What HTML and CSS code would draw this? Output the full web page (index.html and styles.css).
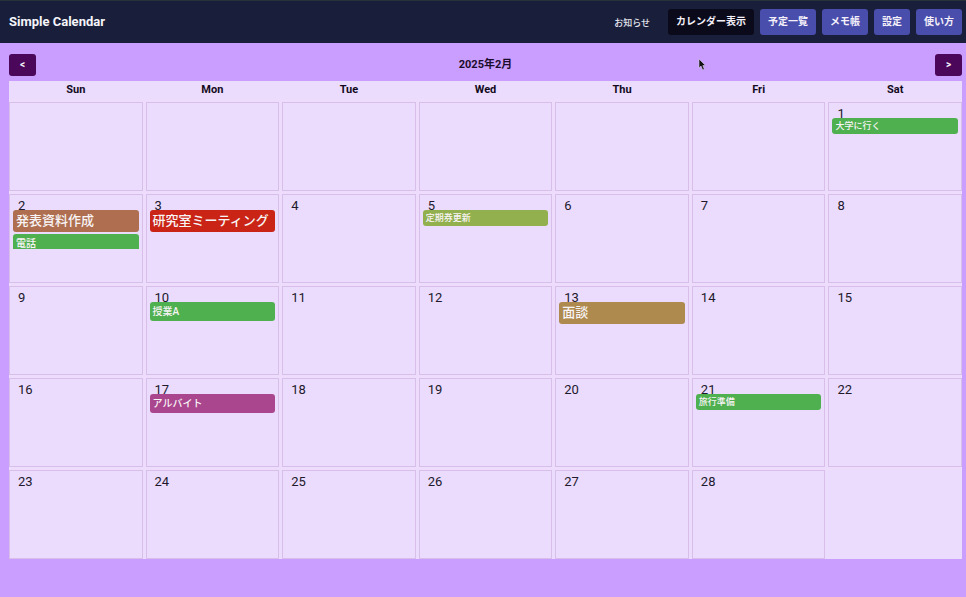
FILE: index.html
```
<!DOCTYPE html>
<html lang="ja">
<head>
<meta charset="utf-8">
<meta name="viewport" content="width=device-width, initial-scale=1">
<title>Simple Calendar</title>
<link rel="stylesheet" href="styles.css">
</head>
<body>
<header class="header">
  <h1 class="title">Simple Calendar</h1>
  <nav class="nav">
    <a class="nav-news" href="#news">お知らせ</a>
    <button class="nav-button nav-button-active" type="button">カレンダー表示</button>
    <button class="nav-button" type="button">予定一覧</button>
    <button class="nav-button" type="button">メモ帳</button>
    <button class="nav-button" type="button">設定</button>
    <button class="nav-button" type="button">使い方</button>
  </nav>
</header>
<main class="main">
  <div class="toolbar">
    <button class="step" type="button">&lt;</button>
    <h2 class="month">2025年2月</h2>
    <button class="step" type="button">&gt;</button>
    <svg class="cursor" width="8" height="13" viewBox="0 0 8 13" aria-hidden="true"><path d="M1 1v9l2-2 1.700 4 1.600-.7L4.800 7.500H7.500z" fill="#111" stroke="#d9c9ea" stroke-width=".6"/></svg>
  </div>
  <table class="calendar">
    <thead>
      <tr><th>Sun</th><th>Mon</th><th>Tue</th><th>Wed</th><th>Thu</th><th>Fri</th><th>Sat</th></tr>
    </thead>
    <tbody>
      <tr>
        <td></td><td></td><td></td><td></td><td></td><td></td>
        <td><div class="day">1</div><div class="events"><div class="event small green">大学に行く</div></div></td>
      </tr>
      <tr>
        <td><div class="day">2</div><div class="events"><div class="event large brown">発表資料作成</div><div class="event medium green">電話</div></div></td>
        <td><div class="day">3</div><div class="events"><div class="event large red">研究室ミーティング</div></div></td>
        <td><div class="day">4</div></td>
        <td><div class="day">5</div><div class="events"><div class="event small olive">定期券更新</div></div></td>
        <td><div class="day">6</div></td>
        <td><div class="day">7</div></td>
        <td><div class="day">8</div></td>
      </tr>
      <tr>
        <td><div class="day">9</div></td>
        <td><div class="day">10</div><div class="events"><div class="event medium green">授業A</div></div></td>
        <td><div class="day">11</div></td>
        <td><div class="day">12</div></td>
        <td><div class="day">13</div><div class="events"><div class="event large gold">面談</div></div></td>
        <td><div class="day">14</div></td>
        <td><div class="day">15</div></td>
      </tr>
      <tr>
        <td><div class="day">16</div></td>
        <td><div class="day">17</div><div class="events"><div class="event medium magenta">アルバイト</div></div></td>
        <td><div class="day">18</div></td>
        <td><div class="day">19</div></td>
        <td><div class="day">20</div></td>
        <td><div class="day">21</div><div class="events"><div class="event small green">旅行準備</div></div></td>
        <td><div class="day">22</div></td>
      </tr>
      <tr>
        <td><div class="day">23</div></td>
        <td><div class="day">24</div></td>
        <td><div class="day">25</div></td>
        <td><div class="day">26</div></td>
        <td><div class="day">27</div></td>
        <td><div class="day">28</div></td>
      </tr>
    </tbody>
  </table>
</main>
</body>
</html>
```

FILE: styles.css
```
* {
  box-sizing: border-box;
}

body {
  margin: 0;
  background: #c99eff;
  color: #21182b;
  font-family: Roboto, "Noto Sans CJK JP", sans-serif;
}

button {
  border: 0;
  font-family: inherit;
  font-weight: 700;
  color: #f4f0fa;
  cursor: pointer;
}

.header {
  display: flex;
  align-items: center;
  justify-content: space-between;
  padding: 8px 4px 8px 9px;
  border-top: 1px solid #25323a;
  background: #191f3b;
}

.title {
  margin: 0;
  font-size: 13px;
  line-height: 16px;
  color: #f5f5fa;
}

.nav {
  display: flex;
  align-items: center;
  gap: 6px;
}

.nav-news {
  margin-right: 12px;
  font-size: 9px;
  font-weight: 500;
  color: #e6e6ee;
  text-decoration: none;
}

.nav-button {
  padding: 0 8px;
  border-radius: 3px;
  background: #494dab;
  font-size: 10px;
  line-height: 26px;
}

.nav-button-active {
  background: #0b0a1a;
}

.main {
  padding: 11px 4px 38px 9px;
}

.toolbar {
  position: relative;
  display: flex;
  align-items: center;
  justify-content: space-between;
  margin-bottom: 5px;
}

.step {
  width: 27px;
  padding: 0;
  border-radius: 3px;
  background: #4b075a;
  font-size: 10px;
  line-height: 22px;
}

.month {
  margin: 0;
  font-size: 11px;
  line-height: 22px;
  color: #1c0c2c;
}

.cursor {
  position: absolute;
  top: 4px;
  left: 72.3%;
}

.calendar {
  display: block;
  background: #eedcfd;
}

.calendar thead,
.calendar tbody {
  display: grid;
  gap: 3px;
}

.calendar thead {
  padding-bottom: 3px;
}

.calendar tr {
  display: grid;
  grid-template-columns: repeat(7, minmax(0, 1fr));
  gap: 3px;
}

.calendar tr:last-child {
  background: #ebdcfd;
}

.calendar th {
  padding: 0;
  font-size: 11px;
  line-height: 18px;
  color: #120a1c;
}

.calendar td {
  min-height: 89px;
  padding: 0 3px;
  border: 1px solid #d7bfe9;
  background: #ebdcfd;
}

.day {
  height: 15px;
  padding-left: 5px;
  font-size: 13px;
  line-height: 22px;
}

.events {
  position: relative;
  display: flex;
  flex-direction: column;
  gap: 2px;
  max-height: 39px;
  overflow: hidden;
}

.event {
  flex: none;
  padding: 0 3px;
  border-radius: 3px;
  color: #f8f4f6;
  font-weight: 500;
  white-space: nowrap;
  overflow: hidden;
}

.small {
  font-size: 9px;
  line-height: 16px;
}

.medium {
  font-size: 10px;
  line-height: 19px;
}

.large {
  font-size: 13px;
  line-height: 22px;
}

.green {
  background: #4fb050;
}

.brown {
  background: #ae6e4f;
}

.red {
  background: #c92415;
}

.olive {
  background: #92b04e;
}

.gold {
  background: #ae8a4e;
}

.magenta {
  background: #aa468e;
}
```
